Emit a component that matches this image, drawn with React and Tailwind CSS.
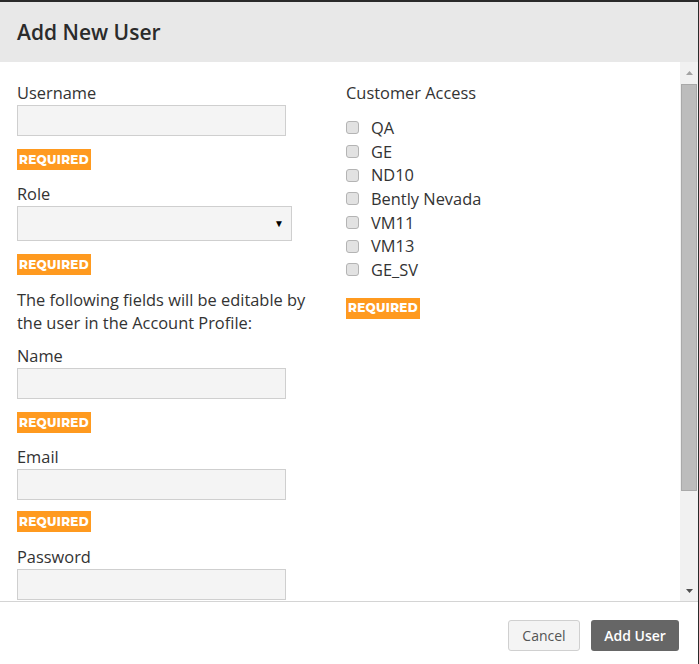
import React from "react";

const Required = () => (
  <div className="h-[21px] w-[74px] bg-[#ff9a1f] flex items-center justify-center text-white text-[12px] font-extrabold tracking-[0.3px] font-['Montserrat','Open_Sans',sans-serif]">
    REQUIRED
  </div>
);

const Field = ({ label, mt = "mt-0" }) => (
  <div className={mt}>
    <div className="text-[16.4px] leading-[22px] text-[#333]">{label}</div>
    <div className="mt-[1px] h-[31px] w-[269px] bg-[#f4f4f4] border border-[#cfcfcf]" />
  </div>
);

const customers = ["QA", "GE", "ND10", "Bently Nevada", "VM11", "VM13", "GE_SV"];

const App = () => {
  return (
    <div className="w-[699px] h-[664px] bg-white flex flex-col border-t-2 border-r border-[#2a2a2a] font-['Open_Sans',sans-serif] text-[#333] overflow-hidden">
      {/* header */}
      <div className="h-[60px] bg-[#e8e8e8] flex items-center px-[17px] pt-[2px] shrink-0">
        <h1 className="text-[21px] font-semibold text-[#2b2b2b]">Add New User</h1>
      </div>

      {/* body */}
      <div className="flex flex-1 min-h-0">
        <div className="flex-1 overflow-hidden flex pl-[17px] pt-[20px]">
          <div className="w-[329px] shrink-0">
            <Field label="Username" />
            <div className="mt-[13px]"><Required /></div>
            <div className="mt-[13px] text-[16.4px] leading-[22px]">Role</div>
            <div className="mt-[1px] h-[35px] w-[275px] bg-[#f4f4f4] border border-[#cfcfcf] flex items-center justify-end pr-[7px]">
              <span className="text-[10px] text-black">▼</span>
            </div>
            <div className="mt-[13px]"><Required /></div>
            <p className="mt-[13px] text-[16.4px] leading-[23px] w-[310px]">
              The following fields will be editable by the user in the Account Profile:
            </p>
            <Field label="Name" mt="mt-[11px]" />
            <div className="mt-[13px]"><Required /></div>
            <Field label="Email" mt="mt-[13px]" />
            <div className="mt-[11px]"><Required /></div>
            <Field label="Password" mt="mt-[14px]" />
          </div>
          <div className="flex-1">
            <div className="text-[16.4px] leading-[22px]">Customer Access</div>
            <div className="mt-[12px] flex flex-col">
              {customers.map((c) => (
                <label key={c} className="flex items-center h-[23.7px]">
                  <span className="w-[13px] h-[13px] rounded-[3px] bg-[#e2e2e2] border border-[#b4b4b4]" />
                  <span className="ml-[12px] text-[16.4px] leading-[22px]">{c}</span>
                </label>
              ))}
            </div>
            <div className="mt-[16px]"><Required /></div>
          </div>
        </div>
        {/* scrollbar */}
        <div className="w-[18px] bg-[#f1f1f1] flex flex-col items-center shrink-0">
          <div className="h-[22px] flex items-center justify-center">
            <svg width="7" height="4" viewBox="0 0 7 4"><path d="M3.5 0L7 4H0z" fill="#a3a3a3" /></svg>
          </div>
          <div className="w-[16px] h-[407px] bg-[#bcbcbc] border border-[#a9a9a9]" />
          <div className="flex-1" />
          <div className="h-[20px] flex items-center justify-center">
            <svg width="7" height="4" viewBox="0 0 7 4"><path d="M0 0H7L3.5 4z" fill="#505050" /></svg>
          </div>
        </div>
      </div>

      {/* footer */}
      <div className="h-[63px] border-t border-[#d4d4d4] flex items-start justify-end gap-[11px] pt-[18px] pr-[19px] shrink-0">
        <button className="h-[31px] w-[72px] rounded-[3px] bg-[#f4f4f4] border border-[#d0d0d0] text-[14px] text-[#555]">
          Cancel
        </button>
        <button className="h-[31px] w-[88px] rounded-[3px] bg-[#666] text-[14px] font-semibold text-white">
          Add User
        </button>
      </div>
    </div>
  );
};

export default App;
